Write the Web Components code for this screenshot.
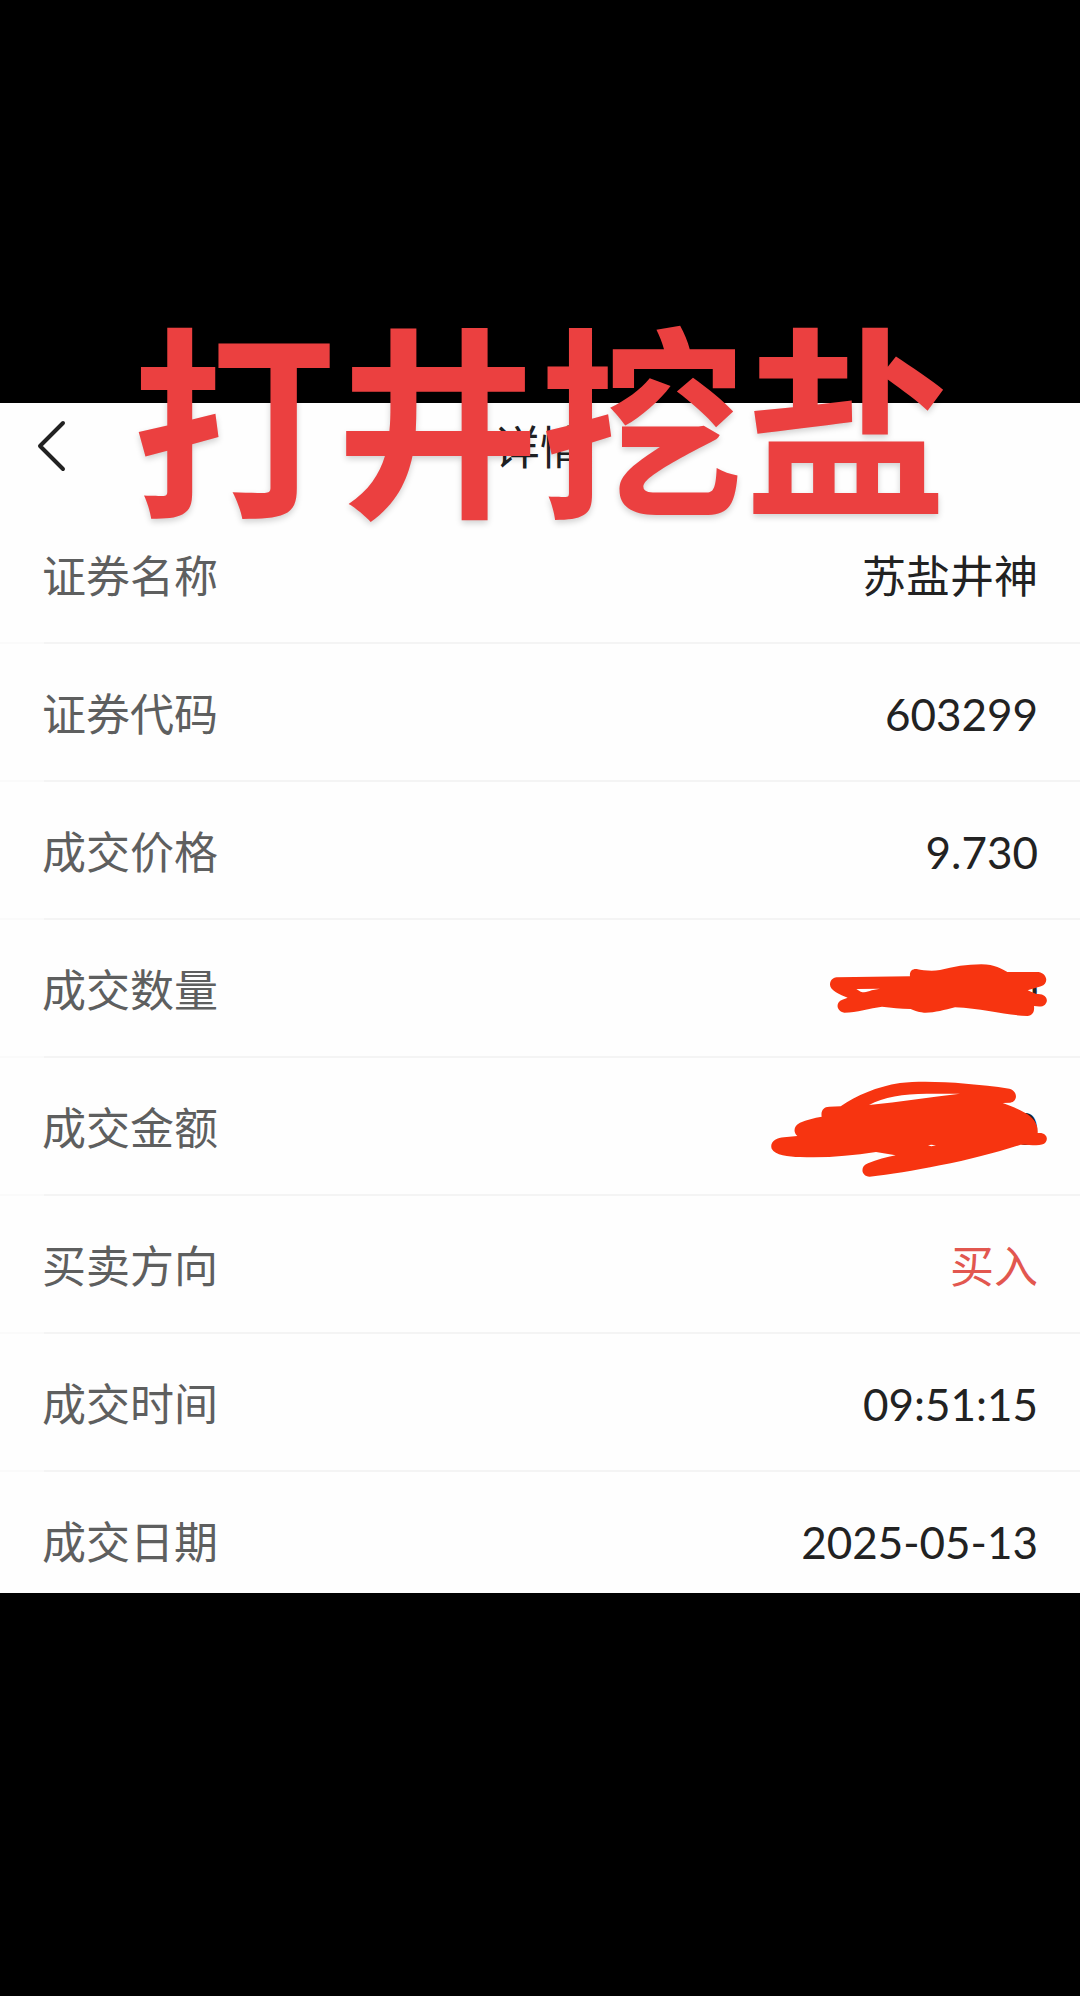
<!DOCTYPE html>
<html lang="zh-CN">
<head>
<meta charset="utf-8">
<meta name="viewport" content="width=device-width, initial-scale=1">
<title>详情</title>
<style>
  body { margin: 0; background: #000; }
</style>
</head>
<body>
<trade-page>
  <banner-text slot="banner">打井挖盐</banner-text>
  <nav-header slot="header">详情</nav-header>
  <detail-row label="证券名称">苏盐井神</detail-row>
  <detail-row label="证券代码">603299</detail-row>
  <detail-row label="成交价格">9.730</detail-row>
  <detail-row label="成交数量">0<ink-mark slot="mark" kind="quantity"></ink-mark></detail-row>
  <detail-row label="成交金额">0<ink-mark slot="mark" kind="amount"></ink-mark></detail-row>
  <detail-row label="买卖方向" tone="buy">买入</detail-row>
  <detail-row label="成交时间">09:51:15</detail-row>
  <detail-row label="成交日期" last>2025-05-13</detail-row>
</trade-page>

<script>
  const attach = (host, html) => {
    host.attachShadow({ mode: 'open' }).innerHTML = html;
  };

  class TradePage extends HTMLElement {
    constructor() {
      super();
      attach(this, `
        <style>
          :host {
            display: flex; flex-direction: column; justify-content: center;
            min-height: 100vh; background: #000;
            font-family: Lato, "Noto Sans CJK SC", sans-serif;
          }
          main { position: relative; background: #fefefe; }
          slot[name="banner"]::slotted(*) {
            position: absolute; left: 0; right: 0; top: -92px; z-index: 2;
          }
        </style>
        <main>
          <slot name="header"></slot>
          <section><slot></slot></section>
          <slot name="banner"></slot>
        </main>`);
    }
  }

  class BannerText extends HTMLElement {
    constructor() {
      super();
      attach(this, `
        <style>
          :host { display: block; pointer-events: none; }
          p {
            margin: 0; text-align: center; white-space: nowrap;
            font: 700 204px/204px "Noto Sans CJK SC", sans-serif;
            color: #eb4040; text-shadow: 0 3px 6px rgba(0, 0, 0, .18);
          }
        </style>
        <p><slot></slot></p>`);
    }
  }

  class NavHeader extends HTMLElement {
    constructor() {
      super();
      attach(this, `
        <style>
          :host { display: block; padding-bottom: 21px; }
          header {
            display: grid; grid-template-columns: 96px 1fr 96px;
            align-items: center; height: 82px;
          }
          button {
            display: flex; align-items: center; height: 82px;
            margin: 0; padding: 0 0 0 36px; border: 0; background: none;
          }
          svg { display: block; width: 32px; height: 56px; }
          h1 {
            margin: 0; text-align: center; color: #202123;
            font: 400 46px/60px "Noto Sans CJK SC", sans-serif;
          }
        </style>
        <header>
          <button type="button" aria-label="返回">
            <svg viewBox="0 0 32 56" fill="none" stroke="#222" stroke-width="4" stroke-linecap="round" stroke-linejoin="round"><path d="M27 7 4 30 27 53"/></svg>
          </button>
          <h1><slot></slot></h1>
        </header>`);
    }
  }

  class DetailRow extends HTMLElement {
    constructor() {
      super();
      attach(this, `
        <style>
          :host { display: block; position: relative; }
          .row {
            display: flex; justify-content: space-between;
            padding: 40px 42px 36px; font-size: 44px; line-height: 60px;
          }
          .rule { height: 2px; background: linear-gradient(90deg, #fafafa 44px, #f4f4f4 44px); }
          .label { color: #5e5f5f; }
          .value { color: #222; }
          :host([tone="buy"]) .value { color: #e2574f; }
          :host([last]) .row { padding-bottom: 21px; }
          :host([last]) .rule { display: none; }
          ::slotted(ink-mark) { position: absolute; right: 0; top: 0; }
        </style>
        <div class="row">
          <span class="label"></span>
          <span class="value"><slot></slot></span>
        </div>
        <div class="rule"></div>
        <slot name="mark"></slot>`);
    }
    connectedCallback() {
      this.shadowRoot.querySelector('.label').textContent = this.getAttribute('label');
    }
  }

  const MARKS = {
    quantity: {
      box: '0 0 1020 414',
      d: `M290 172 L510 169 C508 154 516 146 530 147 C550 151 575 154 600 150 C640 140 680 133 724 133
          C765 133 785 147 802 156 L896 156 C924 162 926 192 903 199 L863 211 L889 222
          C918 219 928 240 915 254 C908 261 895 260 882 258 C884 276 878 287 862 288
          C800 286 730 266 645 262 C612 270 583 279 552 278 C530 276 522 271 512 267
          C480 267 455 263 426 260 C390 265 350 277 313 278 C288 274 286 246 307 239
          L323 233 C300 224 270 211 270 194 C270 181 278 174 290 172 Z
          M349 207 L362 215 C374 219 384 215 395 211 L420 206 Z`
    },
    amount: {
      box: '0 414 1020 414',
      d: `M302 559 C350 526 410 500 480 489 C570 480 690 490 808 506 C836 514 832 546 811 548 L788 549
          C812 557 835 567 852 577 C880 592 895 612 893 639 C918 636 926 654 917 667
          C907 680 880 674 842 674 C770 697 690 719 600 736 C520 752 450 764 389 770
          C362 768 360 738 384 730 C410 719 440 712 467 706 L408 696 C330 708 260 714 180 711
          C145 710 105 706 95 686 C88 665 110 654 132 652 L172 648 C158 636 162 616 180 608
          C200 599 222 594 245 590 C242 573 250 560 268 560 Z
          M387 555 C430 531 490 521 560 521 L660 521 C570 532 480 545 387 555 Z
          M564 676 L574 674 588 676 574 679 Z`
    }
  };

  class InkMark extends HTMLElement {
    constructor() {
      super();
      const mark = MARKS[this.getAttribute('kind')];
      attach(this, `
        <style>
          :host { display: block; width: 340px; height: 138px; }
          svg { display: block; width: 100%; height: 100%; overflow: visible; }
        </style>
        <svg viewBox="${mark.box}" aria-hidden="true"><path fill="#f73410" fill-rule="evenodd" d="${mark.d}"/></svg>`);
    }
  }

  customElements.define('trade-page', TradePage);
  customElements.define('banner-text', BannerText);
  customElements.define('nav-header', NavHeader);
  customElements.define('detail-row', DetailRow);
  customElements.define('ink-mark', InkMark);
</script>
</body>
</html>
